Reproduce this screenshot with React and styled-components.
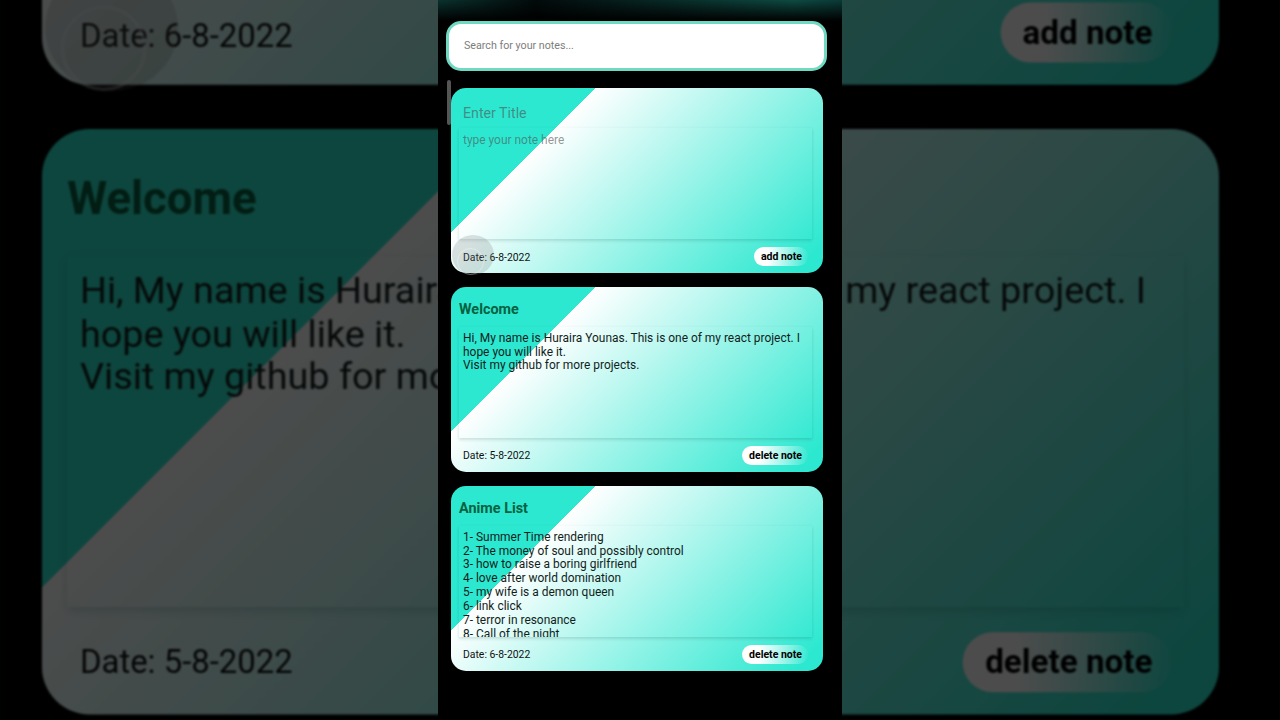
import React from "react";
import styled, { createGlobalStyle } from "styled-components";

const Global = createGlobalStyle`
  html, body { margin: 0; padding: 0; background: #000; }
  body { font-family: Roboto, "Liberation Sans", sans-serif; }
`;

const Stage = styled.div`
  position: relative;
  width: 1280px;
  height: 720px;
  overflow: hidden;
  background: #000;
  display: flex;
  justify-content: center;
`;

const Backdrop = styled.div`
  position: absolute;
  inset: 0;
  display: flex;
  justify-content: center;
  transform-origin: 0 0;
  transform: translate(-1385px, -779px) scale(3.164);
  filter: brightness(0.3) blur(0.32px);
`;

const Phone = styled.div`
  position: relative;
  flex: none;
  width: 404px;
  height: 720px;
  box-sizing: border-box;
  padding: 21px 0 0 8px;
  background:
    linear-gradient(180deg, rgba(0, 0, 0, 0) 0, #000 21px),
    linear-gradient(90deg, #0a332f 0, #020a0a 24%, #06211f 48%, #0e4a42 88%, #0a3a36 100%);
`;

const SearchBar = styled.input`
  display: block;
  width: 381px;
  height: 50px;
  box-sizing: border-box;
  padding: 0 15px 2px;
  border: 3px solid #6fd9c1;
  border-radius: 15px;
  outline: none;
  background: #fff;
  font: 400 10.7px Roboto, sans-serif;
  &::placeholder { color: #7d7d7d; opacity: 1; }
`;

const ScrollThumb = styled.div`
  position: absolute;
  left: 9px;
  top: 80px;
  width: 4px;
  height: 45px;
  border-radius: 2px;
  background: #555;
`;

const NoteList = styled.div`
  display: flex;
  flex-direction: column;
  gap: 14px;
  margin: 17px 0 0 5px;
`;

const Card = styled.div`
  position: relative;
  width: 372px;
  height: 185px;
  box-sizing: border-box;
  padding: 0 11px 0 8px;
  border-radius: 15px;
  display: flex;
  flex-direction: column;
  background: linear-gradient(135deg, #2ce8d0 26%, #ffffff 26%, #2ce8d0 95%);
`;

const TitleRow = styled.div`
  height: 40px;
  flex: none;
  display: flex;
  align-items: center;
  padding: ${(p) => (p.$placeholder ? 10 : 4)}px 0 0 ${(p) => (p.$placeholder ? 4 : 0)}px;
  box-sizing: border-box;
`;

const Title = styled.h3`
  margin: 0;
  font-size: ${(p) => (p.$placeholder ? 14.2 : 14.4)}px;
  font-weight: ${(p) => (p.$placeholder ? 400 : 700)};
  color: ${(p) => (p.$placeholder ? "rgba(80, 80, 80, 0.6)" : "#07613f")};
`;

const Body = styled.div`
  flex: none;
  height: 111px;
  box-sizing: border-box;
  padding: ${(p) => (p.$placeholder ? 5.5 : 4.7)}px 4px 0;
  overflow: hidden;
  white-space: pre-line;
  font-size: 11.95px;
  line-height: 13.88px;
  color: ${(p) => (p.$placeholder ? "rgba(80, 80, 80, 0.6)" : "#121e1c")};
  box-shadow: 0 2px 3px rgba(0, 80, 70, 0.14), 0 0 3px rgba(0, 80, 70, 0.05);
`;

const Footer = styled.div`
  flex: 1;
  display: flex;
  align-items: center;
  justify-content: space-between;
  padding: 0 4px;
`;

const DateLabel = styled.span`
  font-size: 10.4px;
  color: #111;
  margin-top: ${(p) => (p.$placeholder ? 2 : 0)}px;
`;

const NoteButton = styled.button`
  height: 19px;
  padding: 0 6px 0 7px;
  border: 0;
  border-radius: 10px;
  background: linear-gradient(90deg, #fff 25%, rgba(255, 255, 255, 0.04) 100%);
  font: 700 10.5px Roboto, sans-serif;
  color: #000;
`;

const Ripple = styled.div`
  position: absolute;
  left: 1px;
  top: 147px;
  width: 42px;
  height: 40px;
  border-radius: 50%;
  background: rgba(120, 120, 120, 0.22);
  pointer-events: none;
  &::after {
    content: "";
    position: absolute;
    left: 5px;
    top: 13px;
    width: 25px;
    height: 25px;
    border: 1.5px solid rgba(255, 255, 255, 0.35);
    border-radius: 50%;
  }
`;

const notes = [
  {
    title: "Welcome",
    date: "5-8-2022",
    text: "Hi, My name is Huraira Younas. This is one of my react project. I hope you will like it.\nVisit my github for more projects.",
  },
  {
    title: "Anime List",
    date: "6-8-2022",
    text: "1- Summer Time rendering\n2- The money of soul and possibly control\n3- how to raise a boring girlfriend\n4- love after world domination\n5- my wife is a demon queen\n6- link click\n7- terror in resonance\n8- Call of the night",
  },
];

function Column() {
  return (
    <Phone>
      <SearchBar placeholder="Search for your notes..." readOnly />
      <ScrollThumb />
      <NoteList>
        <Card>
          <TitleRow $placeholder>
            <Title $placeholder>Enter Title</Title>
          </TitleRow>
          <Body $placeholder>type your note here</Body>
          <Footer>
            <DateLabel $placeholder>Date: 6-8-2022</DateLabel>
            <NoteButton>add note</NoteButton>
          </Footer>
          <Ripple />
        </Card>
        {notes.map((n) => (
          <Card key={n.title}>
            <TitleRow>
              <Title>{n.title}</Title>
            </TitleRow>
            <Body>{n.text}</Body>
            <Footer>
              <DateLabel>Date: {n.date}</DateLabel>
              <NoteButton>delete note</NoteButton>
            </Footer>
          </Card>
        ))}
      </NoteList>
    </Phone>
  );
}

export default function App() {
  return (
    <>
      <Global />
      <Stage>
        <Backdrop aria-hidden="true">
          <Column />
        </Backdrop>
        <Column />
      </Stage>
    </>
  );
}
